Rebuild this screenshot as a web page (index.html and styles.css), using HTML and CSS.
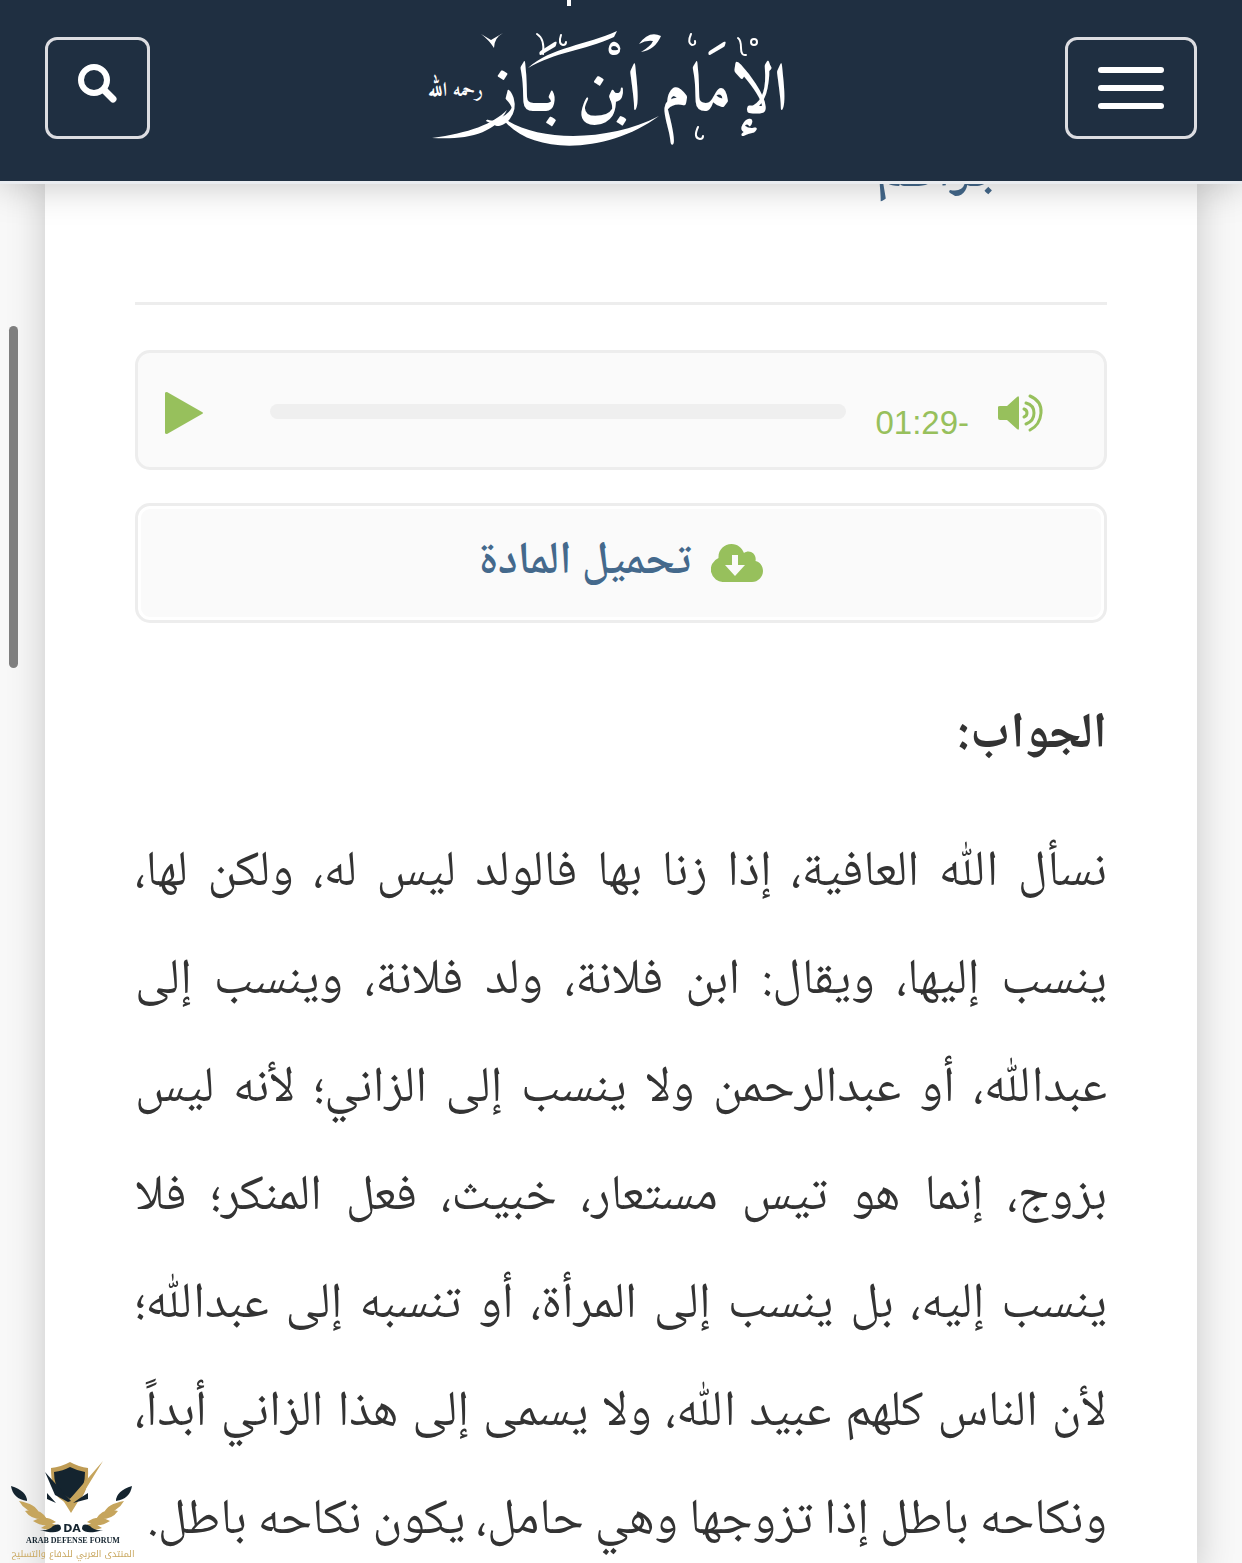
FILE: index.html
```html
<!DOCTYPE html>
<html lang="ar" dir="rtl">
<head>
<meta charset="utf-8">
<meta name="viewport" content="width=device-width, initial-scale=1">
<title>الإمام ابن باز</title>
<link rel="stylesheet" href="styles.css">
</head>
<body>
<header class="site-header">
  <button class="header-button menu-button" type="button" aria-label="القائمة">
    <span class="menu-bar"></span>
    <span class="menu-bar"></span>
    <span class="menu-bar"></span>
  </button>
  <a class="logo" href="#" aria-label="الإمام ابن باز رحمه الله">
    <svg class="logo-art" viewBox="0 0 362 181" width="362" height="181" direction="rtl">
      <rect x="140" y="0" width="4" height="6" fill="#fff"/>
      <g fill="#fff">
        <text class="logo-main" x="361" y="110">الإمَام ابْن بَـاز</text>
        <text class="logo-small" x="56" y="96">رحمه اللّٰه</text>
        <path d="M74 116C98 155 178 156 232 116C180 143 106 142 74 116Z"/>
        <path d="M101 68C124 47 160 45 190 31L187 37C156 51 128 52 101 68Z"/>
        <path d="M5 138C42 133 66 124 80 110C68 134 40 140 5 138Z"/>
        <path d="M54 34L64 40L76 33Q67 38 67 48Q62 40 54 34Z"/>
        <path d="M212 44Q222 30 234 36Q228 50 214 52Q224 46 226 41Q219 40 212 44Z"/>
      </g>
      <g fill="none" stroke="#fff" stroke-width="2" stroke-linecap="round">
        <path d="M110 34q8 5 6 20M134 35q-3 9 2 10q3 0 3-3M264 34q-4 9 1 11q4 0 3-4M311 38q3 2 3 10q0 8 5 7M271 127q-5 11 2 12q3 0 3-3"/>
        <circle cx="327" cy="42" r="3"/>
      </g>
    </svg>
  </a>
  <button class="header-button search-button" type="button" aria-label="بحث">
    <svg viewBox="0 0 40 40" width="40" height="40" fill="none" stroke="#fff" stroke-width="6" stroke-linecap="round">
      <circle cx="16" cy="16" r="13"/>
      <path d="M26 26L35 35" stroke-width="7"/>
    </svg>
  </button>
</header>

<main class="card">
  <h1 class="question">جزاكـم</h1>

  <div class="player" dir="ltr">
    <button class="icon-button" type="button" aria-label="تشغيل">
      <svg viewBox="0 0 38 42" width="38" height="42"><path d="M0 1Q0 0 2 0L37 20Q39 21 37 22L2 42Q0 42 0 41Z" fill="#97c05c"/></svg>
    </button>
    <div class="track"></div>
    <span class="time">01:29-</span>
    <button class="icon-button" type="button" aria-label="الصوت">
      <svg viewBox="0 0 46 40" width="46" height="40">
        <path d="M0 14Q0 13 2 13H9L19 4Q21 2 21 5V35Q21 38 19 36L9 27H2Q0 27 0 25Z" fill="#97c05c"/>
        <path d="M26 16Q29 17 29 20T26 24M28 10Q36 12 36 20T28 31M32 3Q44 8 43 20T32 37" fill="none" stroke="#97c05c" stroke-width="3" stroke-linecap="round"/>
      </svg>
    </button>
  </div>

  <a class="download" href="#">
    <svg viewBox="0 0 52 38" width="52" height="38">
      <path d="M13 38A12.500 12.500 0 0 1 7.500 14C7 6 13 0 20.500 0C27 0 31 4 33 9C38 5 46 9 44.500 17C49 18 52 22 52 27C52 33 47 38 41 38Z" fill="#97c05c"/>
      <path d="M21 11H27V21H34L24 32L14 21H21Z" fill="#fafafa"/>
    </svg>
    <span>تحميل المادة</span>
  </a>

  <h2 class="answer-title">الجواب:</h2>
  <p class="answer">نسأل اللّٰه العافية، إذا زنا بها فالولد ليس له، ولكن لها، ينسب إليها، ويقال: ابن فلانة، ولد فلانة، وينسب إلى عبداللّٰه، أو عبدالرحمن ولا ينسب إلى الزاني؛ لأنه ليس بزوج، إنما هو تيس مستعار، خبيث، فعل المنكر؛ فلا ينسب إليه، بل ينسب إلى المرأة، أو تنسبه إلى عبداللّٰه؛ لأن الناس كلهم عبيد اللّٰه، ولا يسمى إلى هذا الزاني أبداً، ونكاحه باطل إذا تزوجها وهي حامل، يكون نكاحه باطل.</p>
</main>

<div class="scroll-thumb"></div>

<svg class="watermark" viewBox="0 0 135 108" width="135" height="108">
  <path d="M46 13Q56 12 65 7Q74 12 83 13Q84 34 76 43L65 51L54 43Q46 34 46 13Z" fill="#bf9c55"/>
  <path d="M49 17Q58 16 65 12Q73 16 80 17Q80 31 74 37L65 44L56 37Q49 31 49 17Z" fill="#14242f"/>
  <path d="M46 31L64 45L98 6L66 58L56 42Z" fill="#c6a55d"/>
  <path d="M40 17L66 46L63 47L50 40Z" fill="#14242f"/>
  <path d="M51 39V45L60 49ZM92 39V45L77 49L84 44Z" transform="translate(-9 -1)" fill="#14242f"/>
  <g id="wing">
    <path d="M6 31Q22 36 22 46Q8 44 6 31Z" fill="#14242f"/>
    <path d="M14 46Q31 49 34 58Q20 57 14 46ZM20 56Q35 52 42 64Q27 66 20 56ZM28 66Q40 59 51 67Q40 74 28 66ZM36 73Q47 65 54 72Q50 78 36 73Z" fill="#c6a55d"/>
    <path d="M35 75Q44 76 48 71Q56 67 56 74Q52 80 35 75Z" fill="#14242f"/>
  </g>
  <use href="#wing" transform="matrix(-1 0 0 1 133 0)"/>
  <g text-anchor="middle">
    <text class="mark-initials" x="67" y="77">DA</text>
    <text class="mark-name" x="68" y="88">ARAB DEFENSE FORUM</text>
    <text class="mark-arabic" x="68" y="102">المنتدى العربي للدفاع والتسليح</text>
  </g>
</svg>
</body>
</html>
```

FILE: styles.css
```css
* {
  box-sizing: border-box;
}

body {
  margin: 0;
  position: relative;
  overflow-x: hidden;
  background: #f8f8f8;
  color: #333;
  font-family: "Noto Naskh Arabic", "DejaVu Sans", sans-serif;
}

.site-header {
  position: sticky;
  top: 0;
  z-index: 2;
  display: flex;
  align-items: flex-start;
  justify-content: space-between;
  padding: 0 45px;
  background: #1f2f41;
  border-bottom: 3px solid #e9ecf0;
  box-shadow: 0 0 36px rgba(0, 0, 0, 0.25);
}

.header-button {
  display: flex;
  height: 102px;
  margin-top: 37px;
  padding: 0;
  background: none;
  border: 3px solid #dcdde1;
  border-radius: 12px;
}

.menu-button {
  flex-direction: column;
  align-items: center;
  gap: 12px;
  width: 132px;
  padding-top: 27px;
}

.menu-bar {
  width: 66px;
  height: 6px;
  border-radius: 3px;
  background: #fff;
}

.search-button {
  justify-content: center;
  width: 105px;
  padding-top: 24px;
}

.logo {
  display: block;
}

.logo-art {
  display: block;
}

.logo-main {
  font: bold 66px Amiri, "Noto Naskh Arabic", serif;
}

.logo-small {
  font: bold 20px Amiri, "Noto Naskh Arabic", serif;
}

.card {
  margin: 0 45px;
  padding: 0 90px;
  background: #fff;
  box-shadow: 0 0 36px rgba(0, 0, 0, 0.2);
}

.question {
  height: 129px;
  margin: -8px 0 45px;
  padding-right: 104px;
  border-bottom: 3px solid #ededed;
  color: #44698c;
  font-size: 50px;
  line-height: 0;
}

.player,
.download {
  display: flex;
  align-items: center;
  height: 120px;
  border: 3px solid #ededed;
  border-radius: 15px;
  background: #fafafa;
}

.player {
  gap: 29px;
  padding: 6px 60px 0 27px;
  color: #97c05c;
}

.icon-button {
  display: flex;
  padding: 0;
  background: none;
  border: 0;
}

.track {
  flex: 1;
  height: 15px;
  margin: 0 0 4px 38px;
  border-radius: 8px;
  background: #efefef;
}

.time {
  margin-top: 20px;
  font: 33px "Liberation Sans", sans-serif;
}

.download {
  justify-content: center;
  gap: 20px;
  margin-top: 33px;
  box-shadow: inset 0 0 0 3px #fff;
  color: #44698c;
  font-size: 46px;
  font-weight: 600;
  line-height: 60px;
  text-decoration: none;
}

.answer-title {
  margin: 60px 0 0;
  font-size: 50px;
  line-height: 108px;
}

.answer {
  margin: 30px 0 0;
  font-size: 50px;
  line-height: 108px;
  text-align: justify;
}

.scroll-thumb {
  position: absolute;
  top: 326px;
  left: 9px;
  width: 9px;
  height: 342px;
  border-radius: 5px;
  background: #7f7f7f;
}

.watermark {
  position: fixed;
  bottom: 0;
  left: 5px;
  direction: ltr;
}

.mark-initials {
  fill: #14242f;
  font: bold 11px "DejaVu Sans", sans-serif;
}

.mark-name {
  fill: #14242f;
  font: bold 8px "Liberation Serif", serif;
}

.mark-arabic {
  fill: #c9a860;
  font: 9px "Noto Kufi Arabic", "DejaVu Sans", sans-serif;
}
```
